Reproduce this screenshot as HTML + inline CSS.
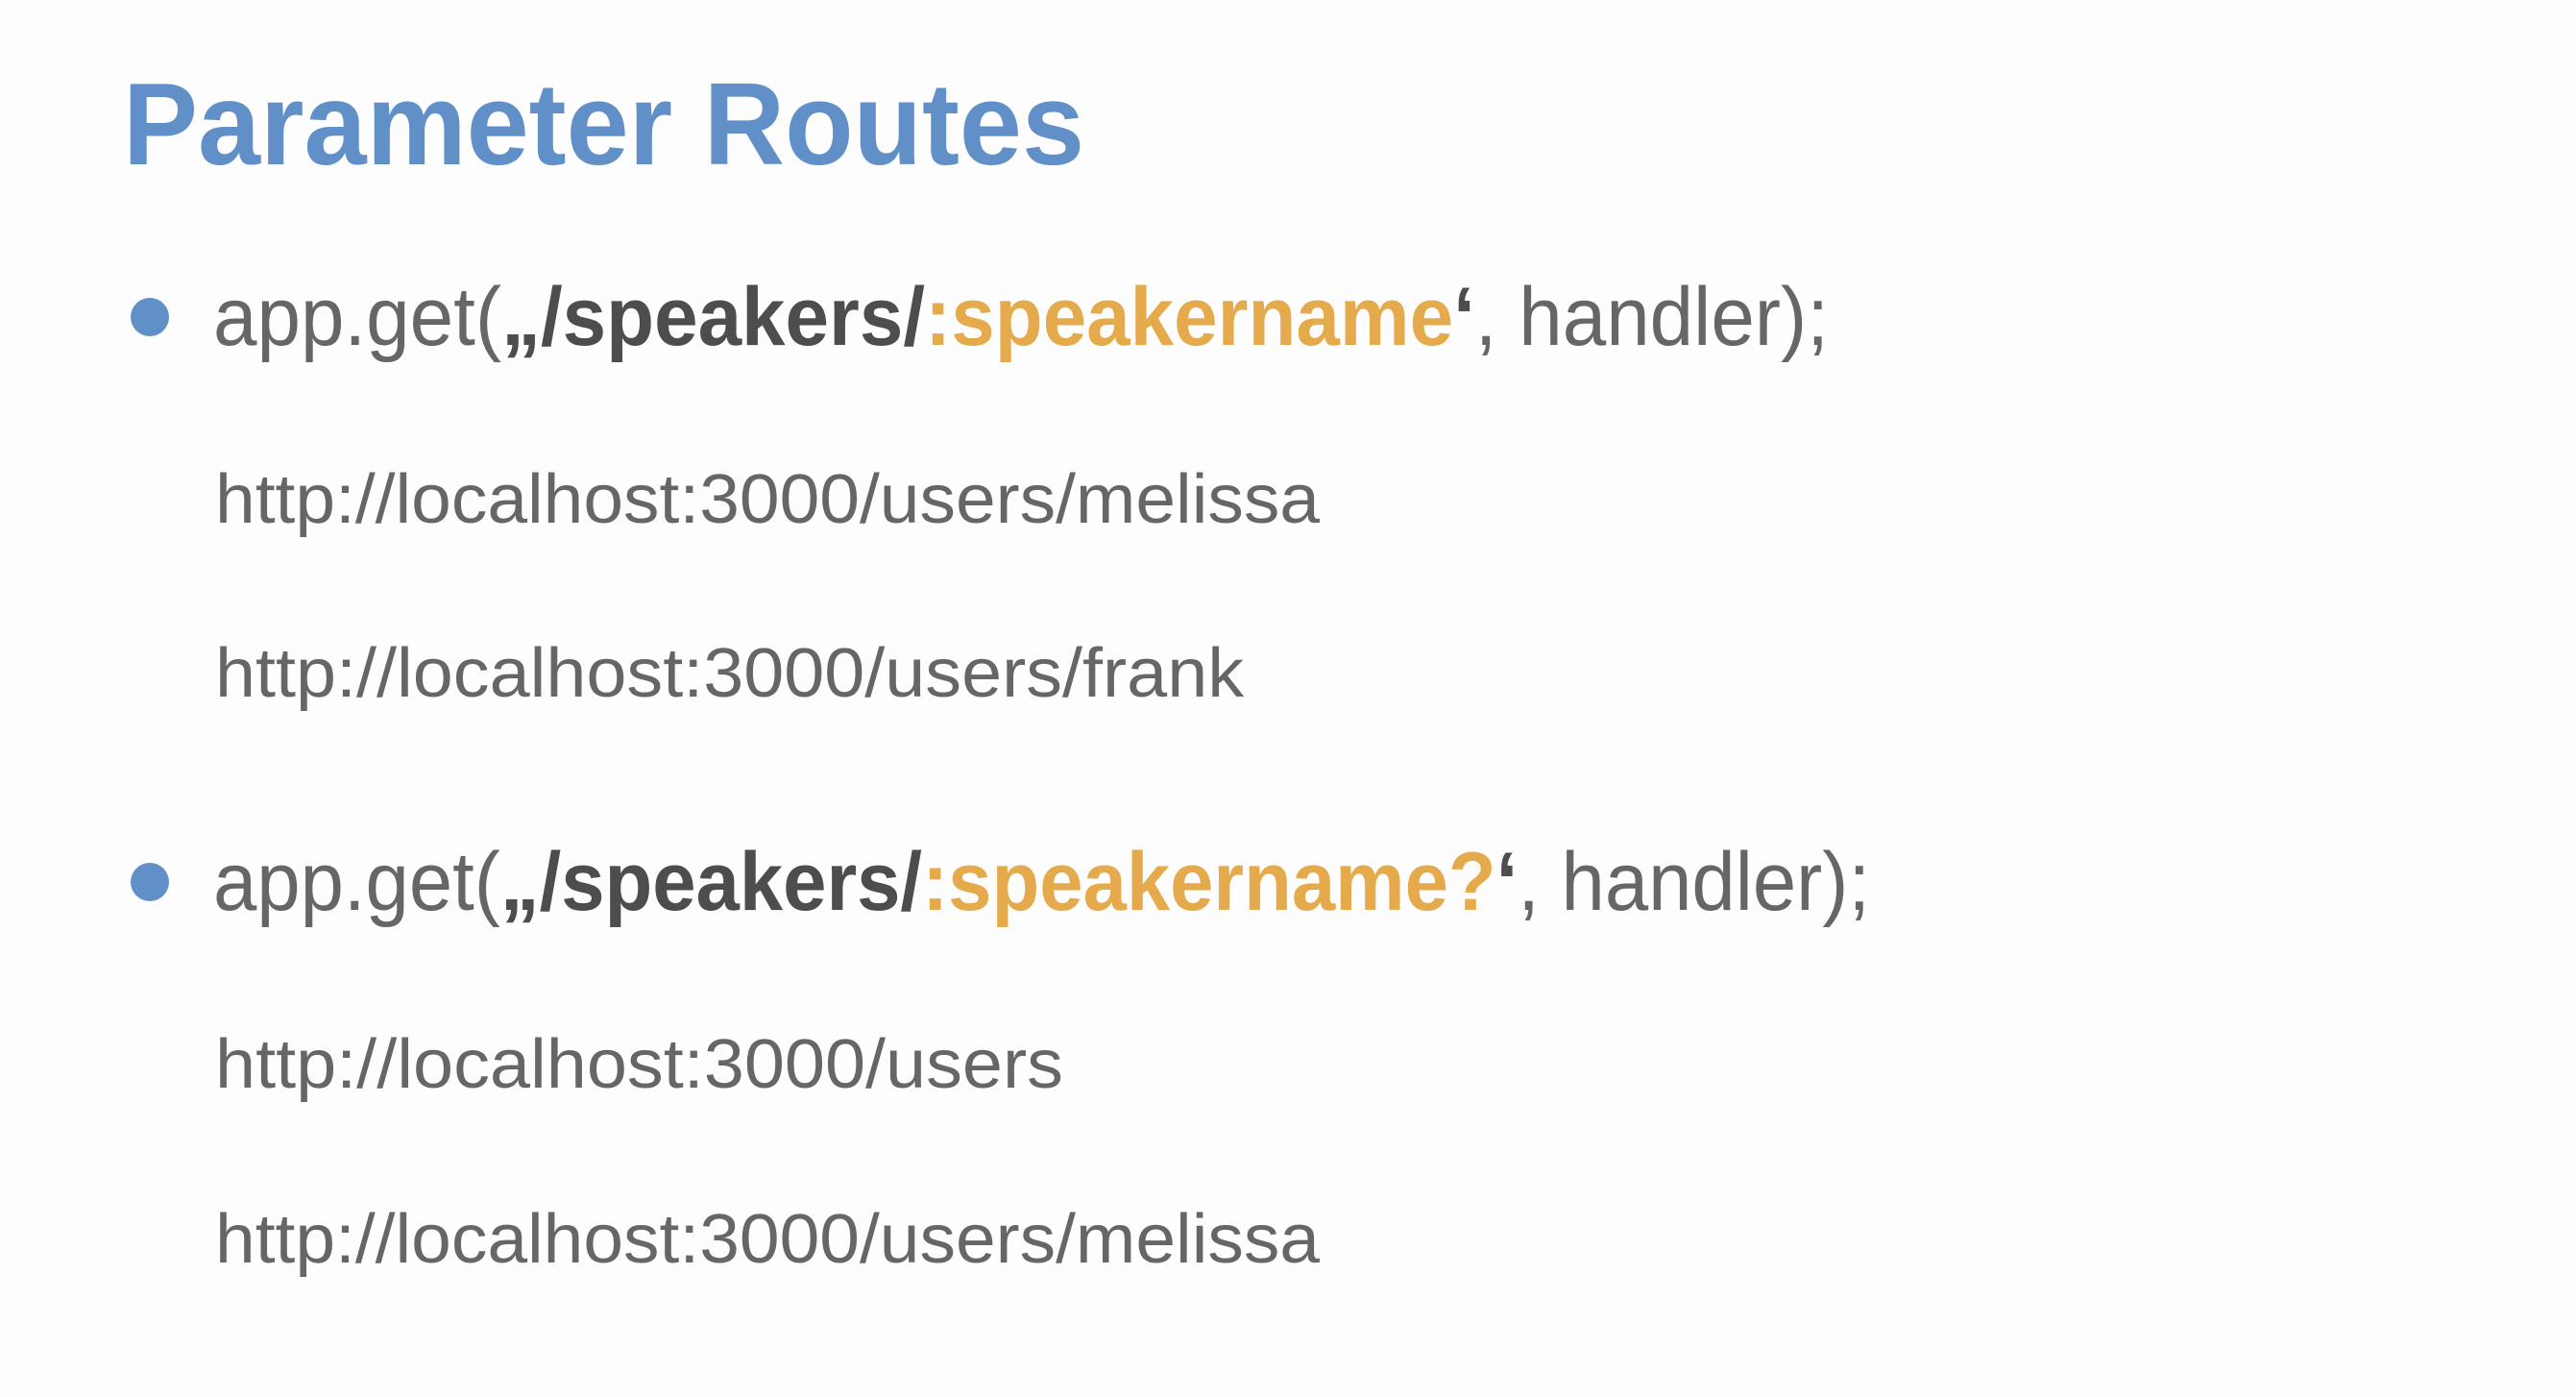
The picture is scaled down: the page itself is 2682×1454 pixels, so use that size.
<!DOCTYPE html>
<html><head><meta charset="utf-8"><style>
html,body{margin:0;padding:0;background:#fdfdfd;}
svg{display:block;}
text{font-family:"Liberation Sans",sans-serif;}
</style></head><body>
<svg width="2682" height="1454" viewBox="0 0 2682 1454" xmlns="http://www.w3.org/2000/svg">
<rect width="2682" height="1454" fill="#fdfdfd"/>
<text x="128" y="171" font-size="122" font-weight="bold" fill="#6190c8" textLength="1001" lengthAdjust="spacingAndGlyphs">Parameter Routes</text>

<circle cx="156" cy="330" r="20" fill="#6190c8"/>
<text x="222" y="359" font-size="86" fill="#666" textLength="1682" lengthAdjust="spacingAndGlyphs">app.get(<tspan font-weight="bold" fill="#4d4d4f">„/speakers/</tspan><tspan font-weight="bold" fill="#e4aa4b">:speakername</tspan><tspan font-weight="bold" fill="#4d4d4f">‘</tspan>, handler);</text>

<text x="224" y="544" font-size="72" fill="#666" textLength="1150" lengthAdjust="spacingAndGlyphs">http://localhost:3000/users/melissa</text>
<text x="224" y="725" font-size="72" fill="#666" textLength="1071" lengthAdjust="spacingAndGlyphs">http://localhost:3000/users/frank</text>

<circle cx="156" cy="918" r="20" fill="#6190c8"/>
<text x="222" y="947" font-size="86" fill="#666" textLength="1725" lengthAdjust="spacingAndGlyphs">app.get(<tspan font-weight="bold" fill="#4d4d4f">„/speakers/</tspan><tspan font-weight="bold" fill="#e4aa4b">:speakername?</tspan><tspan font-weight="bold" fill="#4d4d4f">‘</tspan>, handler);</text>

<text x="224" y="1132" font-size="72" fill="#666" textLength="883" lengthAdjust="spacingAndGlyphs">http://localhost:3000/users</text>
<text x="224" y="1314" font-size="72" fill="#666" textLength="1150" lengthAdjust="spacingAndGlyphs">http://localhost:3000/users/melissa</text>
</svg>
</body></html>
